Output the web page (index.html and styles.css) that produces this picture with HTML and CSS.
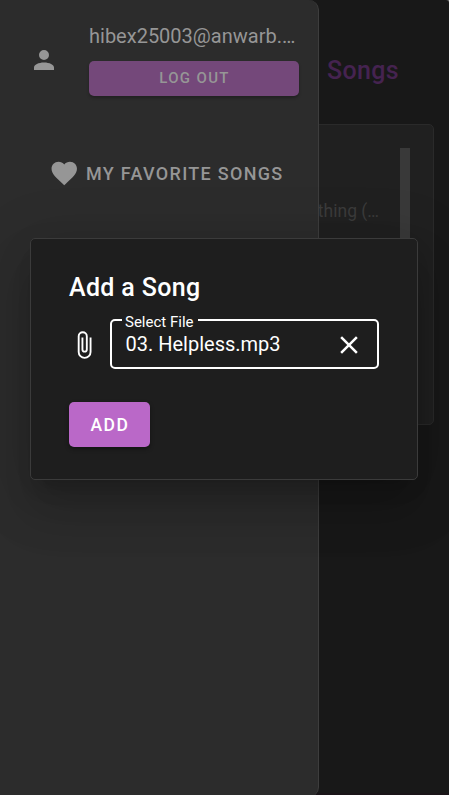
FILE: index.html
```html
<!DOCTYPE html>
<html lang="en">
<head>
<meta charset="utf-8">
<title>Songs</title>
<link rel="stylesheet" href="styles.css">
</head>
<body>
<main class="page">
  <h1 class="page-title">Songs</h1>
  <section class="song-list">
    <p class="song">thing (…</p>
    <div class="scrollbar"></div>
  </section>
</main>
<aside class="drawer">
  <div class="account">
    <svg class="account-icon" viewBox="0 0 24 24"><path d="M12,4A4,4 0 0,1 16,8A4,4 0 0,1 12,12A4,4 0 0,1 8,8A4,4 0 0,1 12,4M12,14C16.42,14 20,15.79 20,18V20H4V18C4,15.79 7.58,14 12,14Z"/></svg>
    <div class="account-info">
      <div class="email">hibex25003@anwarb.…</div>
      <button class="logout">LOG OUT</button>
    </div>
  </div>
  <a class="favorites">
    <svg class="heart-icon" viewBox="0 0 24 24"><path d="M12,21.35L10.55,20.03C5.4,15.36 2,12.27 2,8.5C2,5.41 4.42,3 7.5,3C9.24,3 10.91,3.81 12,5.08C13.09,3.81 14.76,3 16.5,3C19.58,3 22,5.41 22,8.5C22,12.27 18.6,15.36 13.45,20.03L12,21.35Z"/></svg>
    <span>MY FAVORITE SONGS</span>
  </a>
</aside>
<div class="overlay">
  <section class="dialog">
    <h2 class="dialog-title">Add a Song</h2>
    <div class="file-row">
      <svg class="icon clip-icon" viewBox="0 0 24 24"><path d="M16.5,6V17.5A4,4 0 0,1 12.5,21.5A4,4 0 0,1 8.5,17.5V5A2.5,2.5 0 0,1 11,2.5A2.5,2.5 0 0,1 13.5,5V15.5A1,1 0 0,1 12.5,16.5A1,1 0 0,1 11.5,15.5V6H10V15.5A2.5,2.5 0 0,0 12.5,18A2.5,2.5 0 0,0 15,15.5V5A4,4 0 0,0 11,1A4,4 0 0,0 7,5V17.5A5.5,5.5 0 0,0 12.5,23A5.5,5.5 0 0,0 18,17.5V6H16.5Z"/></svg>
      <div class="field">
        <span class="field-label">Select File</span>
        <span class="file-name">03. Helpless.mp3</span>
        <svg class="icon clear-icon" viewBox="0 0 24 24"><path d="M19,6.41L17.59,5L12,10.59L6.41,5L5,6.41L10.59,12L5,17.59L6.41,19L12,13.41L17.59,19L19,17.59L13.41,12L19,6.41Z"/></svg>
      </div>
    </div>
    <button class="add">ADD</button>
  </section>
</div>
</body>
</html>
```

FILE: styles.css
```css
* { box-sizing: border-box; margin: 0; }
html { background: #777; }
body {
  position: relative;
  width: 449px;
  height: 795px;
  overflow: hidden;
  background: #181818;
  border-top-right-radius: 3px;
  font-family: Roboto, "Liberation Sans", sans-serif;
}
svg { display: block; flex: none; fill: currentColor; }
button { border: 0; padding: 0; font-family: inherit; font-weight: 500; }

.page {
  height: 795px;
  padding: 51px 15px 0 0;
  border-bottom: 2px solid #1a1418;
}
.page-title {
  height: 40px;
  padding-right: 35px;
  color: #452350;
  font-size: 25px;
  line-height: 40px;
  font-weight: 500;
  letter-spacing: 0.35px;
  text-align: right;
}
.song-list {
  display: flex;
  justify-content: flex-end;
  gap: 21px;
  height: 301px;
  margin-top: 33px;
  padding: 23px 23px 23px 0;
  background: #202020;
  border: 1px solid #2a2a2a;
  border-radius: 5px;
}
.song {
  padding-top: 51px;
  color: #3b3b3b;
  font-size: 17.5px;
  line-height: 24px;
}
.scrollbar { width: 10px; height: 180px; background: #393939; }

.drawer {
  position: absolute;
  top: 0;
  left: 0;
  width: 319px;
  height: 797px;
  padding: 21px 19px 0 29px;
  background: #2c2c2c;
  border-right: 1px solid #3d3d3d;
  border-radius: 0 10px 10px 0;
  color: #969696;
}
.account { display: flex; gap: 30px; }
.account-icon { width: 30px; height: 30px; margin-top: 24px; }
.account-info { width: 210px; }
.email {
  height: 30px;
  font-size: 20px;
  line-height: 30px;
  white-space: nowrap;
}
.logout {
  display: block;
  width: 210px;
  height: 35px;
  margin-top: 10px;
  padding: 0 0 2px 1px;
  background: #74487a;
  border-radius: 5px;
  box-shadow: 0 2px 3px #0004;
  color: #969696;
  font-size: 15px;
  letter-spacing: 1.34px;
}
.favorites {
  display: flex;
  align-items: center;
  gap: 7px;
  height: 32px;
  margin: 61px 0 0 19.5px;
  font-size: 18px;
  font-weight: 500;
  letter-spacing: 1.3px;
  white-space: nowrap;
}
.heart-icon { width: 30.5px; height: 30.5px; }

.overlay {
  position: absolute;
  inset: 0;
  padding: 238px 31px 0 30px;
}
.dialog {
  height: 242px;
  padding: 29px 38px 0;
  background: #1e1e1e;
  border: 1px solid #3b3b3b;
  border-radius: 5px;
  box-shadow: 0 14px 19px -9px #0003, 0 30px 48px 4px #00000024, 0 11px 58px 10px #0000001f;
  color: #fff;
}
.dialog-title {
  height: 40px;
  font-size: 25px;
  line-height: 40px;
  font-weight: 500;
  letter-spacing: 0.35px;
}
.file-row { display: flex; align-items: center; gap: 11px; margin-top: 11px; }
.icon { width: 30px; height: 30px; }
.clip-icon { margin-top: 2px; }
.clear-icon { margin-top: 1px; }
.field {
  position: relative;
  display: flex;
  flex: 1;
  align-items: center;
  justify-content: space-between;
  height: 50px;
  padding: 0 13px;
  border: 2px solid #fff;
  border-radius: 5px;
}
.field-label {
  position: absolute;
  top: -8px;
  left: 10px;
  padding: 0 5px 0 3px;
  background: #1e1e1e;
  font-size: 15px;
  line-height: 18px;
}
.file-name { padding-left: 0.5px; font-size: 20px; line-height: 25px; }
.add {
  display: block;
  width: 81px;
  height: 45px;
  margin-top: 33px;
  padding-left: 1px;
  background: #ba68c8;
  border-radius: 5px;
  box-shadow: 0 2px 4px #0006;
  color: #fff;
  font-size: 17.5px;
  letter-spacing: 1.56px;
}
```
